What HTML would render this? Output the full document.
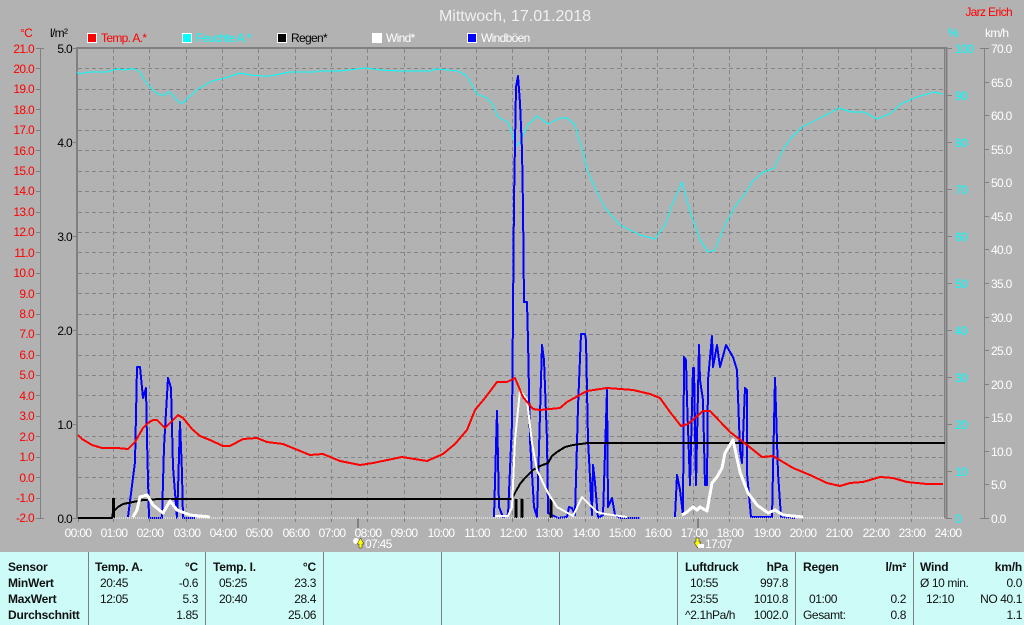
<!DOCTYPE html>
<html><head><meta charset="utf-8"><title>Mittwoch, 17.01.2018</title>
<style>
html,body{margin:0;padding:0;background:#b2b2b2;width:1024px;height:625px;overflow:hidden}
svg{display:block;font-family:"Liberation Sans",sans-serif;font-size:12px}
text{letter-spacing:-.67px}
.l{fill:#f00;text-anchor:end}
.b{fill:#000;text-anchor:end}
.c{fill:#0ff}
.w{fill:#fff}
.x text{fill:#fff;text-anchor:middle}
.t text{fill:#111;letter-spacing:-.4px}
.t .e{text-anchor:end}
.t .h{font-weight:bold;letter-spacing:-.2px}
path.p{fill:none;stroke-linejoin:round;shape-rendering:crispEdges}
</style></head><body>
<svg width="1024" height="625" viewBox="0 0 1024 625" xmlns="http://www.w3.org/2000/svg">
<rect width="1024" height="625" fill="#b2b2b2"/>
<text x="515" y="21" text-anchor="middle" fill="#f0f0f0" style="font-size:16px;letter-spacing:0">Mittwoch, 17.01.2018</text>
<text x="1012" y="16" text-anchor="end" fill="#f00">Jarz Erich</text>
<!-- legend -->
<g stroke="#fff" stroke-width="1" shape-rendering="crispEdges">
<rect x="87.5" y="33.5" width="9" height="9" fill="#f00"/>
<rect x="182.5" y="33.5" width="9" height="9" fill="#0ff"/>
<rect x="277.5" y="33.5" width="9" height="9" fill="#000"/>
<rect x="372.5" y="33.5" width="9" height="9" fill="#fff"/>
<rect x="467.5" y="33.5" width="9" height="9" fill="#00f"/>
</g>
<text x="101" y="42" fill="#f00">Temp. A.*</text>
<text x="196" y="42" fill="#0ff">Feuchte A.*</text>
<text x="291" y="42" fill="#000">Regen*</text>
<text x="386" y="42" fill="#fff">Wind*</text>
<text x="481" y="42" fill="#fff">Windböen</text>
<!-- units -->
<text x="20" y="37" fill="#f00">°C</text>
<text x="50" y="37" fill="#000">l/m²</text>
<text x="948" y="37" fill="#0ff">%</text>
<text x="985" y="37" fill="#fff">km/h</text>
<!-- grid -->
<g stroke="#858585" stroke-width="1" stroke-dasharray="4 3" shape-rendering="crispEdges" fill="none">
<path d="M78 68.5H945M78 89.5H945M78 109.5H945M78 130.5H945M78 150.5H945M78 171.5H945M78 191.5H945M78 212.5H945M78 232.5H945M78 252.5H945M78 273.5H945M78 293.5H945M78 314.5H945M78 334.5H945M78 355.5H945M78 375.5H945M78 395.5H945M78 416.5H945M78 436.5H945M78 457.5H945M78 477.5H945M78 498.5H945"/>
<path d="M113.5 49V518M149.5 49V518M186.5 49V518M222.5 49V518M258.5 49V518M295.5 49V518M331.5 49V518M367.5 49V518M404.5 49V518M440.5 49V518M476.5 49V518M512.5 49V518M548.5 49V518M585.5 49V518M621.5 49V518M657.5 49V518M693.5 49V518M729.5 49V518M766.5 49V518M802.5 49V518M838.5 49V518M875.5 49V518M911.5 49V518"/>
</g>
<!-- axes -->
<g stroke="#808080" fill="none" shape-rendering="crispEdges">
<path stroke-width="2" d="M77 47V519M76 48H947M946.5 47V519"/>
<path stroke-width="1" d="M944.5 48V518"/>
<path stroke-width="1" d="M40.5 48V518M36 48.5H44M36 518.5H44M36 68.5H40M36 89.5H40M36 109.5H40M36 130.5H40M36 150.5H40M36 171.5H40M36 191.5H40M36 212.5H40M36 232.5H40M36 252.5H40M36 273.5H40M36 293.5H40M36 314.5H40M36 334.5H40M36 355.5H40M36 375.5H40M36 395.5H40M36 416.5H40M36 436.5H40M36 457.5H40M36 477.5H40M36 498.5H40"/>
<path stroke-width="1" d="M73 48.5H77M73 142.5H77M73 236.5H77M73 330.5H77M73 424.5H77M73 518.5H77"/>
<path stroke-width="1" d="M947 48.5H952M947 95.5H952M947 142.5H952M947 189.5H952M947 236.5H952M947 283.5H952M947 330.5H952M947 377.5H952M947 424.5H952M947 471.5H952M947 518.5H952"/>
<path stroke-width="1" d="M984.5 48V518M980 48.5H989M980 518.5H989M985 82.5H989M985 115.5H989M985 149.5H989M985 182.5H989M985 216.5H989M985 249.5H989M985 283.5H989M985 317.5H989M985 350.5H989M985 384.5H989M985 417.5H989M985 451.5H989M985 484.5H989"/>
<path stroke-width="1" d="M78.5 518V522M113.5 518V522M149.5 518V522M186.5 518V522M222.5 518V522M258.5 518V522M295.5 518V522M331.5 518V522M367.5 518V522M404.5 518V522M440.5 518V522M476.5 518V522M512.5 518V522M548.5 518V522M585.5 518V522M621.5 518V522M657.5 518V522M693.5 518V522M729.5 518V522M766.5 518V522M802.5 518V522M838.5 518V522M875.5 518V522M911.5 518V522"/>
<path stroke-width="2" d="M358 518V528M698 518V528"/>
</g>
<!-- left red labels -->
<g class="l">
<text x="34" y="53">21.0</text><text x="34" y="73">20.0</text><text x="34" y="93">19.0</text><text x="34" y="114">18.0</text><text x="34" y="134">17.0</text><text x="34" y="155">16.0</text><text x="34" y="175">15.0</text><text x="34" y="195">14.0</text><text x="34" y="216">13.0</text><text x="34" y="236">12.0</text><text x="34" y="257">11.0</text><text x="34" y="277">10.0</text><text x="34" y="298">9.0</text><text x="34" y="318">8.0</text><text x="34" y="338">7.0</text><text x="34" y="359">6.0</text><text x="34" y="379">5.0</text><text x="34" y="400">4.0</text><text x="34" y="420">3.0</text><text x="34" y="441">2.0</text><text x="34" y="461">1.0</text><text x="34" y="482">0.0</text><text x="34" y="502">-1.0</text><text x="34" y="522">-2.0</text>
</g>
<g class="b">
<text x="72" y="53">5.0</text><text x="72" y="147">4.0</text><text x="72" y="241">3.0</text><text x="72" y="335">2.0</text><text x="72" y="429">1.0</text><text x="72" y="523">0.0</text>
</g>
<g class="c">
<text x="955" y="53">100</text><text x="955" y="100">90</text><text x="955" y="147">80</text><text x="955" y="194">70</text><text x="955" y="241">60</text><text x="955" y="288">50</text><text x="955" y="335">40</text><text x="955" y="382">30</text><text x="955" y="429">20</text><text x="955" y="476">10</text><text x="955" y="523">0</text>
</g>
<g class="w">
<text x="991" y="53">70.0</text><text x="991" y="87">65.0</text><text x="991" y="120">60.0</text><text x="991" y="154">55.0</text><text x="991" y="187">50.0</text><text x="991" y="221">45.0</text><text x="991" y="254">40.0</text><text x="991" y="288">35.0</text><text x="991" y="322">30.0</text><text x="991" y="355">25.0</text><text x="991" y="389">20.0</text><text x="991" y="422">15.0</text><text x="991" y="456">10.0</text><text x="991" y="489">5.0</text><text x="991" y="523">0.0</text>
</g>
<g class="x">
<text x="78" y="537">00:00</text><text x="114" y="537">01:00</text><text x="150" y="537">02:00</text><text x="187" y="537">03:00</text><text x="223" y="537">04:00</text><text x="259" y="537">05:00</text><text x="296" y="537">06:00</text><text x="332" y="537">07:00</text><text x="368" y="537">08:00</text><text x="404" y="537">09:00</text><text x="441" y="537">10:00</text><text x="477" y="537">11:00</text><text x="513" y="537">12:00</text><text x="549" y="537">13:00</text><text x="586" y="537">14:00</text><text x="622" y="537">15:00</text><text x="658" y="537">16:00</text><text x="694" y="537">17:00</text><text x="730" y="537">18:00</text><text x="767" y="537">19:00</text><text x="803" y="537">20:00</text><text x="839" y="537">21:00</text><text x="876" y="537">22:00</text><text x="912" y="537">23:00</text><text x="948" y="537">24:00</text>
</g>
<!-- sun markers -->
<circle cx="356" cy="541" r="3" fill="#fff"/>
<path d="M360.5 538L364 544H362V548H359V544H357Z" fill="#ff0" stroke="#222" stroke-width=".5"/>
<text x="365" y="548" class="w">07:45</text>
<path d="M696 538H699V542H701L697.500 548L694 542H696Z" fill="#ff0" stroke="#222" stroke-width=".5"/>
<rect x="698" y="544" width="6" height="4" fill="#fff"/>
<text x="705" y="548" class="w">17:07</text>
<!-- curves -->
<path class="p" stroke="#0ff" stroke-width="1" d="M77 72L80 74L84 73L90 72L107 72L113 70L118 69L125 70L130 69L135 69L140 72L145 81L150 87L155 92L160 95L165 95L168 92L170 92L175 98L180 103L183 103L187 99L198 89L212 81L225 78L240 73L250 75L262 76L270 76L280 74L290 72L315 72L317 71L340 71L365 68L380 70L400 71L430 71L436 69L458 71L467 76L473 87L477 94L487 98L493 105L498 117L508 122L512 133L516 146L520 142L528 125L537 116L548 124L560 118L567 118L575 125L583 153L588 172L595 188L605 208L620 225L640 235L655 239L665 225L672 205L682 182L689 208L700 240L708 252L715 250L725 225L734 208L746 192L752 182L762 173L774 168L784 148L791 138L802 127L822 117L839 108L851 112L864 112L877 119L891 113L901 104L914 98L934 92L943 94"/>
<path class="p" stroke="#00f" stroke-width="2" d="M128 517L135 462L137 367L140 367L143 398L146 388L147 440L149 518L162 518L164 447L168 378L171 388L173 467L177 518L178 490L180 422L182 473L183 518L195 518"/>
<path class="p" stroke="#00f" stroke-width="2" d="M494 517L497 411L499 507L503 517L508 515L512 423L514 200L516 87L518 76L520 103L522 150L523 207L524 302L527 302L528 340L530 440L534 507L537 517L542 345L544 360L547 440L548 513L558 518L567 517L569 507L572 508L575 515L578 407L581 334L585 334L586 340L588 440L592 515L593 465L595 483L598 518L603 515L607 390L608 507L612 498L615 515L620 518L640 518"/>
<path class="p" stroke="#00f" stroke-width="2" d="M675 517L677 475L680 490L683 515L684 357L686 360L687 400L690 485L693 368L694 368L696 485L699 345L700 380L703 400L705 485L707 485L708 380L712 336L713 367L717 345L720 367L726 345L733 357L737 370L740 450L742 463L745 388L747 390L747 473L751 517L772 517L775 378L778 473L781 517L795 518"/>
<path class="p" stroke="#000" stroke-width="2" d="M78 518L112 518L113 512L118 507L123 504L133 502L143 500L160 499L512 499L516 491L520 484L524 479L533 470L540 466L548 463L552 456L557 452L565 447L573 445L588 443L945 443"/>
<path class="p" stroke="#000" stroke-width="3" d="M113.500 498V518M516 499V518M522 499V518M551 499V518"/>
<path class="p" stroke="#fff" stroke-width="1" stroke-dasharray="1 1" d="M113 518H945"/>
<path class="p" stroke="#fff" stroke-width="3" d="M133 517L137 510L140 497L147 495L153 505L163 513L170 501L177 510L190 515L210 517"/>
<path class="p" stroke="#fff" stroke-width="2" d="M495 516L508 516L512 507L515 440L520 390L527 400L532 443L537 470L548 493L557 507L573 516L582 497L597 512L605 514L627 517"/>
<path class="p" stroke="#fff" stroke-width="3" d="M682 515L687 512L693 507L697 510L700 507L707 511L712 483L717 477L722 468L725 453L733 440L740 472L748 493L757 505L768 513L775 510L783 515L803 517"/>
<path class="p" stroke="#f00" stroke-width="2" d="M78 435L82 439L92 445L102 448L117 448L128 449L135 442L143 428L148 423L153 420L157 420L165 428L178 415L183 418L192 429L200 436L210 440L223 446L230 446L243 439L257 438L267 442L283 444L310 455L323 454L340 461L360 465L373 463L402 457L427 461L443 454L455 444L467 430L475 410L485 398L497 382L507 382L515 378L523 397L533 409L540 410L560 408L567 402L587 391L607 388L633 390L650 394L660 398L670 412L681 426L688 424L703 411L710 411L730 432L747 445L762 457L773 456L793 468L810 475L827 483L840 486L850 483L863 482L880 477L893 478L907 482L927 484L943 484"/>
<!-- table -->
<rect x="0" y="552" width="1024" height="73" fill="#ccfbf8"/>
<path d="M88.500 552V625M205.500 552V625M323.500 552V625M441.500 552V625M559.500 552V625M677.500 552V625M795.500 552V625M913.500 552V625" stroke="#808080" shape-rendering="crispEdges"/>
<g class="t">
<text x="8" y="571" class="h">Sensor</text><text x="8" y="587" class="h">MinWert</text><text x="8" y="603" class="h">MaxWert</text><text x="8" y="619" class="h">Durchschnitt</text>
<text x="95" y="571" class="h">Temp. A.</text><text x="198" y="571" class="e h">°C</text>
<text x="100" y="587">20:45</text><text x="198" y="587" class="e">-0.6</text>
<text x="100" y="603">12:05</text><text x="198" y="603" class="e">5.3</text>
<text x="198" y="619" class="e">1.85</text>
<text x="213" y="571" class="h">Temp. I.</text><text x="316" y="571" class="e h">°C</text>
<text x="219" y="587">05:25</text><text x="316" y="587" class="e">23.3</text>
<text x="219" y="603">20:40</text><text x="316" y="603" class="e">28.4</text>
<text x="316" y="619" class="e">25.06</text>
<text x="685" y="571" class="h">Luftdruck</text><text x="788" y="571" class="e h">hPa</text>
<text x="690" y="587">10:55</text><text x="788" y="587" class="e">997.8</text>
<text x="690" y="603">23:55</text><text x="788" y="603" class="e">1010.8</text>
<text x="685" y="619">^2.1hPa/h</text><text x="788" y="619" class="e">1002.0</text>
<text x="803" y="571" class="h">Regen</text><text x="906" y="571" class="e h">l/m²</text>
<text x="809" y="603">01:00</text><text x="906" y="603" class="e">0.2</text>
<text x="803" y="619">Gesamt:</text><text x="906" y="619" class="e">0.8</text>
<text x="920" y="571" class="h">Wind</text><text x="1022" y="571" class="e h">km/h</text>
<text x="920" y="587">Ø 10 min.</text><text x="1022" y="587" class="e">0.0</text>
<text x="926" y="603">12:10</text><text x="1022" y="603" class="e">NO 40.1</text>
<text x="1022" y="619" class="e">1.1</text>
</g>
</svg>
</body></html>
